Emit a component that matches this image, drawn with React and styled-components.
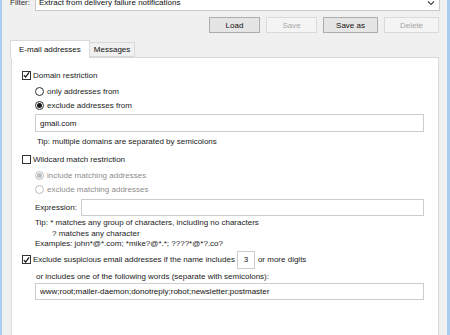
import React from 'react';
import styled, { createGlobalStyle } from 'styled-components';

const Global = createGlobalStyle`
  html, body { margin: 0; padding: 0; background: #f0f0f0; }
  body { font-family: "Liberation Sans", Arial, sans-serif; }
  * { box-sizing: border-box; }
`;

const Window = styled.div`
  width: 450px;
  height: 335px;
  overflow: hidden;
  background: #f0f0f0;
  border-left: 2px solid #a9cdee;
  border-right: 3px solid #a9cdee;
  display: flex;
  flex-direction: column;
  font-size: 8px;
  color: #1a1a1a;
`;

const FilterRow = styled.div`
  display: flex;
  align-items: center;
  margin-top: -8px;
  padding: 0 7px 0 8px;
  height: 19px;
`;

const FilterLabel = styled.span`
  width: 25px;
  padding-top: 2px;
  color: #333;
`;

const Combo = styled.div`
  flex: 1;
  height: 19px;
  background: #fff;
  border: 1px solid #c9c9c9;
  display: flex;
  align-items: center;
  justify-content: space-between;
  padding: 2px 4px 0 3px;
  color: #111;
`;

const ButtonRow = styled.div`
  display: flex;
  justify-content: flex-end;
  gap: 6px;
  padding-right: 8px;
  margin-top: 6px;
`;

const Button = styled.div`
  width: ${p => p.w}px;
  height: 16px;
  display: flex;
  align-items: center;
  justify-content: center;
  border: 1px solid ${p => (p.disabled ? '#dadada' : '#adadad')};
  background: ${p => (p.disabled ? '#f4f4f4' : '#e5e5e5')};
  color: ${p => (p.disabled ? '#a6a6a6' : '#111')};
`;

const TabBar = styled.div`
  display: flex;
  align-items: flex-end;
  padding-left: 8px;
  margin-top: 7px;
  position: relative;
  z-index: 1;
`;

const Tab = styled.div`
  height: ${p => (p.active ? 18 : 15)}px;
  padding: 0 ${p => (p.active ? 8 : 4)}px;
  display: flex;
  align-items: center;
  background: ${p => (p.active ? '#fff' : '#f0f0f0')};
  border: 1px solid #d9d9d9;
  border-bottom: ${p => (p.active ? 'none' : '1px solid #d9d9d9')};
  border-left: ${p => (p.first ? '1px solid #d9d9d9' : 'none')};
  margin-bottom: ${p => (p.active ? -1 : 0)}px;
  color: #111;
`;

const Panel = styled.div`
  flex: 1;
  margin: 0 8px 0 9px;
  background: #fff;
  border: 1px solid #d9d9d9;
  border-bottom: none;
  display: flex;
  flex-direction: column;
  padding: 0 14px 0 10px;
`;

const Row = styled.div`
  display: flex;
  align-items: center;
  height: ${p => p.h || 14}px;
  margin-top: ${p => p.mt || 0}px;
  padding-left: ${p => p.indent || 0}px;
  color: ${p => (p.disabled ? '#8d8d8d' : '#1a1a1a')};
  white-space: nowrap;
`;

const Box = styled.span`
  width: 9px;
  height: 9px;
  border: 1px solid #333;
  background: #fff;
  display: inline-flex;
  align-items: center;
  justify-content: center;
  margin-right: 2px;
  flex: none;
`;

const Radio = styled.span`
  width: 9px;
  height: 9px;
  border-radius: 50%;
  border: 1px solid ${p => (p.disabled ? '#bcbcbc' : '#333')};
  background: #fff;
  display: inline-flex;
  align-items: center;
  justify-content: center;
  margin-right: 3px;
  flex: none;
  &::after {
    content: '';
    display: ${p => (p.checked ? 'block' : 'none')};
    width: 5px;
    height: 5px;
    border-radius: 50%;
    background: ${p => (p.disabled ? '#bcbcbc' : '#1a1a1a')};
  }
`;

const Input = styled.div`
  height: ${p => p.h || 18}px;
  width: ${p => (p.w ? `${p.w}px` : 'auto')};
  flex: ${p => (p.w ? 'none' : '1 1 auto')};
  margin-top: ${p => p.mt || 0}px;
  margin-left: ${p => p.ml || 0}px;
  margin-right: ${p => p.mr || 0}px;
  background: #fff;
  border: 1px solid #cdcdcd;
  display: flex;
  align-items: center;
  justify-content: ${p => (p.center ? 'center' : 'flex-start')};
  padding: 0 4px;
  color: #111;
`;

const Tip = styled.div`
  margin-top: ${p => p.mt || 0}px;
  padding-left: ${p => p.indent || 0}px;
  line-height: ${p => p.lh || 12}px;
  color: #1a1a1a;
  white-space: nowrap;
`;

const Indent = styled.div`
  padding-left: 13px;
  display: flex;
  flex-direction: column;
`;

const Check = () => (
  <svg width="8" height="8" viewBox="0 0 8 8">
    <path d="M1 4.2 L3 6.4 L7 1" fill="none" stroke="#111" strokeWidth="1.4" />
  </svg>
);

const Chevron = () => (
  <svg width="8" height="6" viewBox="0 0 8 6">
    <path d="M1 1.5 L4 4.5 L7 1.5" fill="none" stroke="#444" strokeWidth="1.1" />
  </svg>
);

export default function App() {
  return (
    <>
      <Global />
      <Window>
        <FilterRow>
          <FilterLabel>Filter:</FilterLabel>
          <Combo>
            <span>Extract from delivery failure notifications</span>
            <Chevron />
          </Combo>
        </FilterRow>
        <ButtonRow>
          <Button w={51}>Load</Button>
          <Button w={51} disabled>Save</Button>
          <Button w={55}>Save as</Button>
          <Button w={55} disabled>Delete</Button>
        </ButtonRow>
        <TabBar>
          <Tab active first>E-mail addresses</Tab>
          <Tab>Messages</Tab>
        </TabBar>
        <Panel>
          <Row mt={10}>
            <Box><Check /></Box>Domain restriction
          </Row>
          <Indent>
            <Row mt={2}>
              <Radio />only addresses from
            </Row>
            <Row>
              <Radio checked />exclude addresses from
            </Row>
            <Input mt={2}>gmail.com</Input>
            <Tip mt={4} indent={2}>Tip: multiple domains are separated by semicolons</Tip>
          </Indent>
          <Row mt={4}>
            <Box />Wildcard match restriction
          </Row>
          <Indent>
            <Row mt={2} disabled>
              <Radio checked disabled />include matching addresses
            </Row>
            <Row disabled>
              <Radio disabled />exclude matching addresses
            </Row>
            <Row h={17} mt={3}>
              <span>Expression:</span>
              <Input h={17} ml={4} />
            </Row>
            <Tip mt={2} lh={10.5}>
              Tip: * matches any group of characters, including no characters
            </Tip>
            <Tip lh={10.5} indent={17}>? matches any character</Tip>
            <Tip lh={10.5}>Examples: john*@*.com; *mike?@*.*; ????*@*?.co?</Tip>
          </Indent>
          <Row h={18} mt={1}>
            <Box><Check /></Box>
            <span>Exclude suspicious email addresses if the name includes</span>
            <Input w={18} h={18} ml={2} mr={3} center>3</Input>
            <span>or more digits</span>
          </Row>
          <Indent>
            <Tip mt={2} indent={1}>or includes one of the following words (separate with semicolons):</Tip>
            <Input h={17} mt={0}>www;root;mailer-daemon;donotreply;robot;newsletter;postmaster</Input>
          </Indent>
        </Panel>
      </Window>
    </>
  );
}
